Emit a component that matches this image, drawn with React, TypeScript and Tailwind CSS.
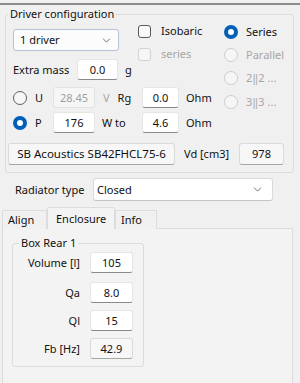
import React from "react";
import { ChevronDown } from "lucide-react";

const Radio = ({ state }: { state: "on" | "off" | "dis" }) => {
  if (state === "on")
    return (
      <span className="w-[14px] h-[14px] rounded-full bg-[#005fb8] flex items-center justify-center shrink-0">
        <span className="w-[6px] h-[6px] rounded-full bg-white" />
      </span>
    );
  if (state === "off")
    return <span className="w-[14px] h-[14px] rounded-full border border-[#5f5f5f] bg-[#f7f7f7] shrink-0" />;
  return <span className="w-[14px] h-[14px] rounded-full border border-[#cdcdcd] bg-[#f6f6f6] shrink-0" />;
};

const Check = ({ dis }: { dis?: boolean }) =>
  dis ? (
    <span className="w-[13px] h-[13px] rounded-[3px] border border-[#d2d2d2] bg-[#f6f6f6] shrink-0" />
  ) : (
    <span className="w-[13px] h-[13px] rounded-[3px] border border-[#5a5a5a] bg-[#f9f9f9] shrink-0" />
  );

const Input = ({ className, children }: { className: string; children: React.ReactNode }) => (
  <div
    className={
      "flex items-center justify-center bg-white border border-[#e6e6e6] border-b-[#8a8a8a] rounded-[3px] shrink-0 " +
      className
    }
  >
    {children}
  </div>
);

const ReadOnly = ({ className, children }: { className: string; children: React.ReactNode }) => (
  <div
    className={
      "flex items-center justify-center bg-[#f7f7f7] border border-[#dadada] border-b-[#a6a6a6] rounded-[3px] shrink-0 " +
      className
    }
  >
    {children}
  </div>
);

export default function App() {
  return (
    <div className="w-[300px] h-[383px] bg-[#f0f0f0] overflow-hidden text-[11px] leading-[16px] text-[#111] font-['Noto_Sans',sans-serif]">
      <div className="h-[3px]" />
      <div className="h-[2px] bg-[#8c8c8c]" />

      {/* Driver configuration */}
      <fieldset className="ml-[5px] mt-[1px] w-[289px] h-[167px] border border-[#dcdcdc] rounded-[3px] pl-[7px]">
        <legend className="-ml-[5px] px-[2px] leading-[16px]">Driver configuration</legend>

        <div className="flex">
          <div className="w-[211px] flex flex-col">
            <div className="flex">
              {/* combo + extra mass */}
              <div className="w-[125px] flex flex-col">
                <div className="mt-[7px] h-[22px] w-[106px] bg-[#fcfcfd] border border-[#b4c2d6] rounded-[3px] flex items-center justify-between pl-[6px] pr-[5px]">
                  <span>1 driver</span>
                  <ChevronDown size={13} strokeWidth={1.5} className="text-[#555]" />
                </div>
                <div className="mt-[8px] h-[21px] flex items-center">
                  <span className="w-[64px]">Extra mass</span>
                  <Input className="w-[41px] h-[21px]">0.0</Input>
                  <span className="ml-[7px]">g</span>
                </div>
              </div>
              {/* checkboxes */}
              <div className="flex flex-col">
                <div className="mt-[2px] h-[14px] flex items-center">
                  <Check />
                  <span className="ml-[10px]">Isobaric</span>
                </div>
                <div className="mt-[9px] h-[14px] flex items-center">
                  <Check dis />
                  <span className="ml-[10px] text-[#a6a6a6]">series</span>
                </div>
              </div>
            </div>

            {/* U row */}
            <div className="mt-[7px] h-[21px] flex items-center">
              <span className="w-[22px] flex">
                <Radio state="off" />
              </span>
              <span className="w-[18px]">U</span>
              <div className="w-[42px] h-[21px] flex items-center justify-center bg-[#f6f6f6] border border-[#e2e2e2] rounded-[3px] text-[#a0a0a0]">
                28.45
              </div>
              <span className="w-[47px] flex">
                <span className="ml-[8px] text-[#a6a6a6]">V</span>
                <span className="ml-[8px]">Rg</span>
              </span>
              <Input className="w-[37px] h-[21px]">0.0</Input>
              <span className="ml-[7px]">Ohm</span>
            </div>

            {/* P row */}
            <div className="mt-[4px] h-[21px] flex items-center">
              <span className="w-[22px] flex">
                <Radio state="on" />
              </span>
              <span className="w-[18px]">P</span>
              <Input className="w-[42px] h-[21px]">176</Input>
              <span className="w-[47px] pl-[7px]">W to</span>
              <Input className="w-[37px] h-[21px]">4.6</Input>
              <span className="ml-[7px]">Ohm</span>
            </div>
          </div>

          {/* right radio column */}
          <div className="flex flex-col">
            <div className="mt-[3px] h-[14px] flex items-center">
              <Radio state="on" />
              <span className="ml-[8px]">Series</span>
            </div>
            <div className="mt-[9px] h-[14px] flex items-center">
              <Radio state="dis" />
              <span className="ml-[8px] text-[#a6a6a6]">Parallel</span>
            </div>
            <div className="mt-[9px] h-[14px] flex items-center">
              <Radio state="dis" />
              <span className="ml-[8px] text-[#a6a6a6]">2‖2 ...</span>
            </div>
            <div className="mt-[10px] h-[14px] flex items-center">
              <Radio state="dis" />
              <span className="ml-[8px] text-[#a6a6a6]">3‖3 ...</span>
            </div>
          </div>
        </div>

        {/* SB row */}
        <div className="mt-[10px] -ml-[5px] h-[22px] flex items-center">
          <ReadOnly className="w-[167px] h-[22px] text-[11.5px]">SB Acoustics SB42FHCL75-6</ReadOnly>
          <span className="w-[64px] pl-[9px]">Vd [cm3]</span>
          <ReadOnly className="w-[45px] h-[22px]">978</ReadOnly>
        </div>
      </fieldset>

      {/* Radiator type */}
      <div className="mt-[5px] h-[23px] flex items-center">
        <span className="ml-[15px] w-[78px]">Radiator type</span>
        <div className="w-[180px] h-[23px] bg-white border border-[#dadada] border-b-[#c4c4c4] rounded-[3px] flex items-center justify-between pl-[3px] pr-[8px]">
          <span>Closed</span>
          <ChevronDown size={13} strokeWidth={1.5} className="text-[#555]" />
        </div>
      </div>

      {/* Tabs */}
      <div className="mt-[6px] ml-[2px] h-[22px] flex items-end relative z-10">
        <div className="w-[45px] h-[19px] border border-[#dcdcdc] border-b-0 bg-[#f0f0f0] pl-[5px] flex items-center">Align</div>
        <div className="w-[68px] h-[22px] border border-[#dcdcdc] border-b-0 bg-[#f3f3f3] pl-[8px] flex items-center rounded-t-[2px]">
          Enclosure
        </div>
        <div className="w-[42px] h-[19px] border border-[#dcdcdc] border-b-0 bg-[#f0f0f0] pl-[5px] flex items-center">Info</div>
      </div>
      <div className="-mt-px ml-[2px] w-[291px] h-[170px] border border-[#dcdcdc] bg-[#f3f3f3]">
        <fieldset className="ml-[9px] mt-[6px] w-[132px] h-[132px] border border-[#dcdcdc] rounded-[3px]">
          <legend className="ml-[6px] px-[2px] leading-[16px]">Box Rear 1</legend>
          <div className="mt-[1px] h-[21px] flex items-center">
            <span className="w-[67px] text-right">Volume [l]</span>
            <Input className="ml-[10px] w-[43px] h-[21px]">105</Input>
          </div>
          <div className="mt-[9px] h-[21px] flex items-center">
            <span className="w-[67px] text-right">Qa</span>
            <Input className="ml-[10px] w-[43px] h-[21px]">8.0</Input>
          </div>
          <div className="mt-[7px] h-[21px] flex items-center">
            <span className="w-[67px] text-right">Ql</span>
            <Input className="ml-[10px] w-[43px] h-[21px]">15</Input>
          </div>
          <div className="mt-[7px] h-[21px] flex items-center">
            <span className="w-[67px] text-right">Fb [Hz]</span>
            <ReadOnly className="ml-[10px] w-[43px] h-[21px]">42.9</ReadOnly>
          </div>
        </fieldset>
      </div>
    </div>
  );
}
